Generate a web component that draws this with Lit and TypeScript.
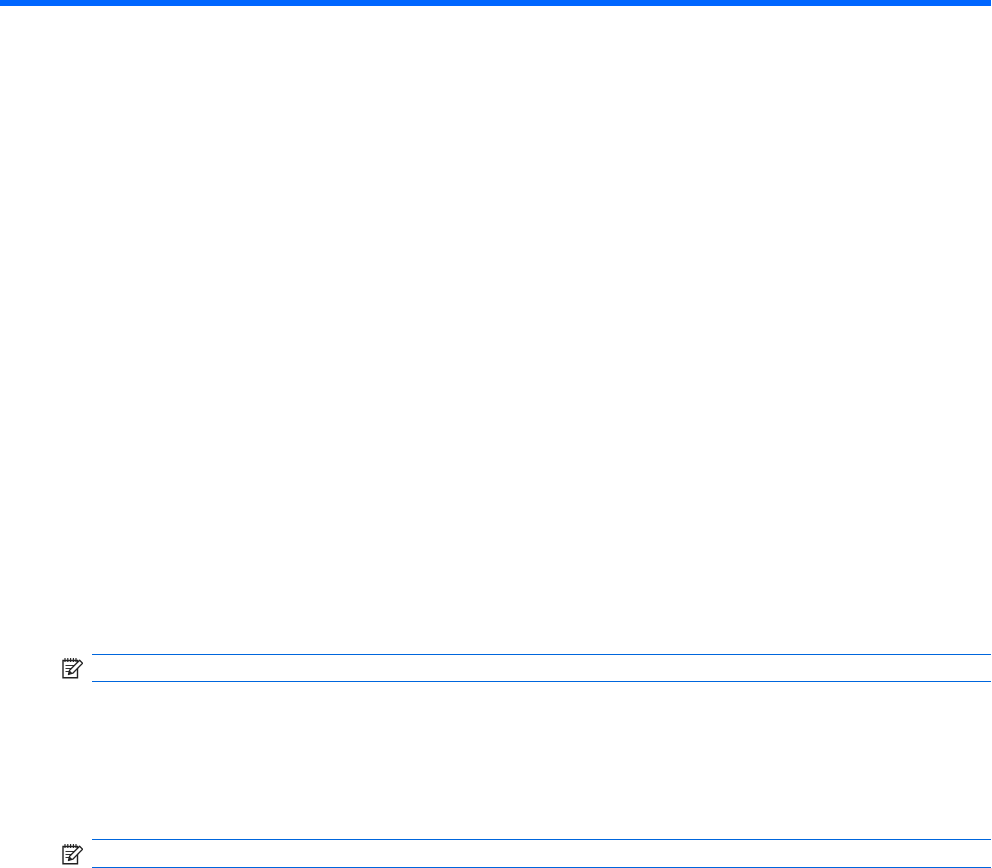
import { LitElement, html, css, svg } from "lit";
import { customElement } from "lit/decorators.js";

const noteIcon = svg`
  <path d="M1 3.5H15.5V20.8H1Z" fill="#fff" stroke="#222" stroke-width="1.4"/>
  <path d="M3 1V5M5.8 1V5M8.6 1V5M11.4 1V5M14 1V5" stroke="#222" stroke-width="1.1"/>
  <path d="M3.5 8.5H12M3.5 11.5H9.5M3.5 14.5H7" stroke="#333" stroke-width="1"/>
  <path d="M6.5 17.5L7.6 13.2L17.6 3.2L20.6 6.2L10.8 16.2Z" fill="#fff" stroke="#222" stroke-width="1.3" stroke-linejoin="round"/>
  <path d="M6.5 17.5L7.6 13.6L10.4 16.3Z" fill="#222"/>
`;

@customElement("app-root")
export class AppRoot extends LitElement {
  static styles = css`
    :host {
      display: block;
      width: 992px;
      height: 868px;
      background: #fff;
      overflow: hidden;
      font-family: "Liberation Sans", Arial, sans-serif;
    }
    .bar {
      height: 6px;
      margin-right: 1px;
      background: #0066ff;
    }
    .notes {
      display: flex;
      flex-direction: column;
      gap: 157px;
      padding: 648px 1px 0 62px;
    }
    .note {
      display: flex;
      align-items: center;
      gap: 9px;
    }
    .icon {
      flex: none;
      width: 21px;
      height: 22px;
    }
    .rule {
      flex: 1;
      height: 26px;
      border-top: 1px solid #0066dd;
      border-bottom: 1px solid #0066dd;
    }
    .rule.tall {
      height: 27px;
    }
  `;

  private note(tall: boolean) {
    return html`<div class="note">
      <svg class="icon" viewBox="0 0 21 22">${noteIcon}</svg>
      <div class="rule ${tall ? "tall" : ""}"></div>
    </div>`;
  }

  render() {
    return html`<div class="bar"></div>
      <div class="notes">${this.note(false)}${this.note(true)}</div>`;
  }
}
